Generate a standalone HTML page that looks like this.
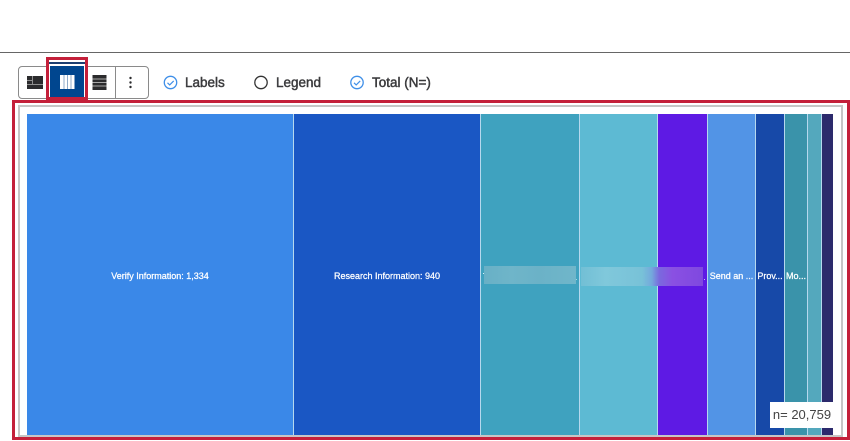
<!DOCTYPE html>
<html>
<head>
<meta charset="utf-8">
<style>
html,body{margin:0;padding:0;background:#fff}
body{width:850px;height:441px;position:relative;overflow:hidden;font-family:"Liberation Sans",sans-serif}
.a{position:absolute;box-sizing:border-box}
.s{position:absolute;top:114px;height:321px;color:#fff;font-size:9px;font-weight:normal;-webkit-text-stroke:0.25px #fff;text-align:center;line-height:325px;white-space:nowrap;overflow:hidden}
.t{position:absolute;top:74px;font-size:13.500px;font-weight:normal;-webkit-text-stroke:0.45px #3a3a3c;color:#3a3a3c;line-height:17px;white-space:nowrap}
</style>
</head>
<body>
<div class="a" style="left:0;top:52px;width:850px;height:1px;background:#666"></div>

<div class="a" style="left:18px;top:66px;width:131px;height:33px;border:1px solid #8a8a8a;border-radius:4px"></div>
<div class="a" style="left:115px;top:67px;width:1px;height:31px;background:#8a8a8a"></div>
<div class="a" style="left:49px;top:66px;width:36px;height:32px;background:#00468f;border-left:1px solid #fff;border-right:1px solid #fff"></div>
<div class="a" style="left:49px;top:62px;width:36px;height:2px;background:#1c3f72"></div>

<!-- icons -->
<svg class="a" style="left:0;top:0" width="850" height="110" viewBox="0 0 850 110">
  <rect x="27" y="76" width="16" height="13" fill="#2b2b2d"/>
  <rect x="27" y="80" width="5" height="1" fill="#8f8f8f"/>
  <rect x="32" y="76" width="1" height="8" fill="#8f8f8f"/>
  <rect x="27" y="84" width="16" height="1" fill="#8f8f8f"/>
  <rect x="60" y="75" width="14.500" height="14" fill="#fff"/>
  <rect x="63.500" y="75" width="1" height="14" fill="#8fabc9"/>
  <rect x="67" y="75" width="1" height="14" fill="#8fabc9"/>
  <rect x="70.500" y="75" width="1" height="14" fill="#8fabc9"/>
  <rect x="92.500" y="75" width="14" height="15" fill="#2b2b2d"/>
  <rect x="92.500" y="78.500" width="14" height="1" fill="#a8a8a8"/>
  <rect x="92.500" y="82" width="14" height="1" fill="#a8a8a8"/>
  <rect x="92.500" y="85.500" width="14" height="1" fill="#a8a8a8"/>
  <g fill="#2b2b2d">
    <circle cx="130.500" cy="78" r="1.200"/>
    <circle cx="130.500" cy="82.500" r="1.200"/>
    <circle cx="130.500" cy="87" r="1.200"/>
  </g>
  <g fill="none">
    <circle cx="170.500" cy="82.500" r="6.200" stroke="#3f8fe8" stroke-width="1.300"/>
    <path d="M167.500 82.800l2.200 2.100 4-4" stroke="#3f8fe8" stroke-width="1.200"/>
    <circle cx="261" cy="82.500" r="6.200" stroke="#333" stroke-width="1.300"/>
    <circle cx="357" cy="82.500" r="6.200" stroke="#3f8fe8" stroke-width="1.300"/>
    <path d="M354 82.800l2.200 2.100 4-4" stroke="#3f8fe8" stroke-width="1.200"/>
  </g>
</svg>

<div class="t" style="left:185px">Labels</div>
<div class="t" style="left:276px">Legend</div>
<div class="t" style="left:372px">Total (N=)</div>

<!-- gray frame -->
<div class="a" style="left:18px;top:105px;width:825px;height:332px;border:2px solid #c6c6c6"></div>

<!-- treemap -->
<div class="a" style="left:27px;top:114px;width:806px;height:321px;background:#b6d8ee"></div>
<div class="s" style="left:27px;width:266px;background:#3a88e8">Verify Information: 1,334</div>
<div class="s" style="left:294px;width:186px;background:#1a57c4">Research Information: 940</div>
<div class="s" style="left:481px;width:98px;background:#3fa2bf"></div>
<div class="s" style="left:580px;width:77px;background:#5dbad3"></div>
<div class="s" style="left:658px;width:49px;background:#5e1ae4"></div>
<div class="s" style="left:708px;width:47px;background:#5294e6">Send an ...</div>
<div class="s" style="left:756px;width:28px;background:#1749a8">Prov...</div>
<div class="s" style="left:785px;width:22px;background:#3a93aa">Mo...</div>
<div class="s" style="left:808px;width:13px;background:#54a8bd"></div>
<div class="s" style="left:822px;width:11px;background:#2c2a6c"></div>

<!-- blurred labels -->
<div class="a" style="left:484px;top:266px;width:92px;height:18px;background:linear-gradient(90deg,#68b0c6,#6fb5c9 30%,#6bb2c7 60%,#70b6ca)"></div>
<div class="a" style="left:581px;top:267px;width:122px;height:19px;background:linear-gradient(90deg,#72bfd5,#80c8db 20%,#78c2d8 50%,#74a8dc 58%,#7a6ade 64%,#8a50e2 75%,#7f48e0)"></div>
<div class="a" style="left:483px;top:273px;width:1px;height:1px;background:#d8eef4"></div>
<div class="a" style="left:576px;top:279px;width:1px;height:1px;background:#9fd6e2"></div>
<div class="a" style="left:704px;top:279px;width:1px;height:1px;background:#c8b8f4"></div>

<!-- n box -->
<div class="a" style="left:770px;top:402px;width:64px;height:26px;background:#fff;color:#444;font-size:13px;line-height:26px;text-align:center;white-space:nowrap">n= 20,759</div>

<!-- red annotations -->
<div class="a" style="left:12px;top:100px;width:838px;height:340px;border:3px solid #c4203a"></div>
<div class="a" style="left:46px;top:57px;width:42px;height:43px;border:3px solid #c4203a"></div>
</body>
</html>
